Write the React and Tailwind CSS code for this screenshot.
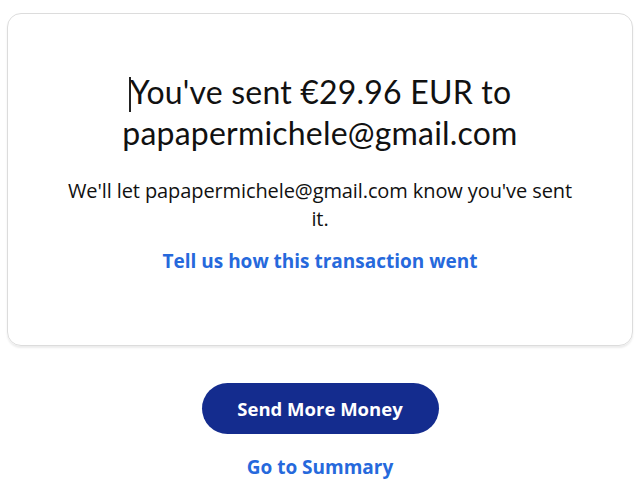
export default function App() {
  return (
    <div className="w-[640px] h-[496px] bg-white font-['Open_Sans',sans-serif] text-[#111] px-[7px] pt-[13px]">
      <div className="h-[333px] rounded-[14px] border border-[#dcdcdc] shadow-[0_2px_2px_rgba(0,0,0,0.08)] flex flex-col items-center pt-[57px] px-10">
        <h1 className="font-['Lato',sans-serif] text-[32px] leading-[41px] text-center font-normal tracking-[0.2px]">
          <span className="inline-block w-[2px] h-[35px] bg-[#222] align-[-8px] mr-[-1px]"></span>
          You've sent €29.96 EUR to
          <br />
          papapermichele@gmail.com
        </h1>
        <p className="mt-[24px] text-[20px] leading-[28px] text-center max-w-[515px] tracking-[-0.1px]">
          We'll let papapermichele@gmail.com know you've sent it.
        </p>
        <a href="#" className="mt-[14px] text-[19px] font-bold text-[#2669dc]">
          Tell us how this transaction went
        </a>
      </div>
      <div className="flex flex-col items-center mt-[37px]">
        <button className="w-[237px] h-[51px] rounded-full bg-[#142c8e] text-white text-[18.5px] font-bold">
          Send More Money
        </button>
        <a href="#" className="mt-[19px] text-[19px] font-bold text-[#2669dc]">
          Go to Summary
        </a>
      </div>
    </div>
  );
}
